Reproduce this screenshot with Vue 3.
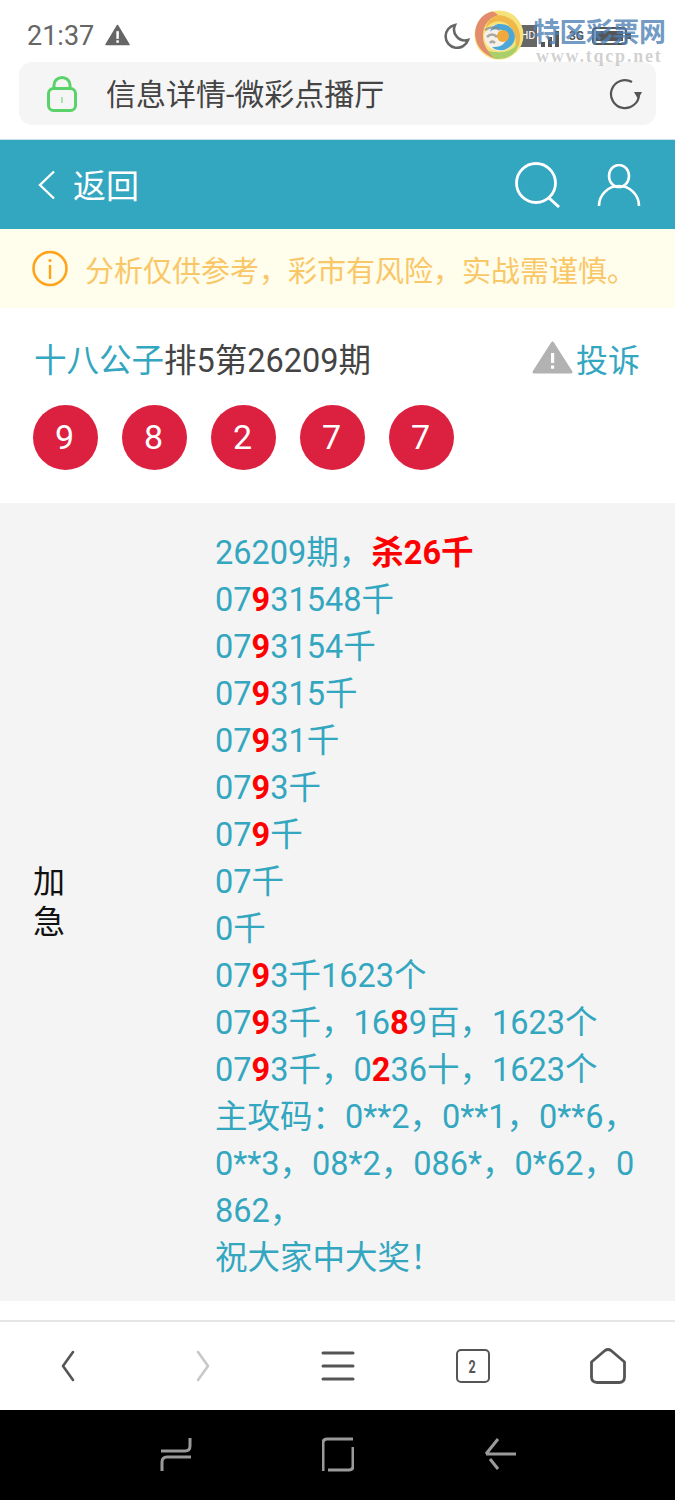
<template>
  <div class="page">
    <div class="status">
      <span class="clock">21:37</span>
      <svg class="st-warn" width="26" height="22" viewBox="0 0 26 22"><path d="M13 1 L25 21 H1 Z" fill="#666" stroke="#666" stroke-width="1.5" stroke-linejoin="round"/><rect x="11.8" y="7" width="2.6" height="8" fill="#fff"/><rect x="11.8" y="16.5" width="2.6" height="2.6" fill="#fff"/></svg>
      <div class="st-right">
        <svg class="st-moon" width="26" height="26" viewBox="0 0 26 26"><path d="M11 2 A11.500 11.500 0 1 0 24 17 A11 11 0 0 1 11 2 Z" fill="none" stroke="#666" stroke-width="2.600"/></svg>
        <svg class="st-wifi" width="26" height="22" viewBox="0 0 26 22"><path d="M2 8 Q13 -1 24 8 M6 12 Q13 6 20 12 M10 16 Q13 13.500 16 16" fill="none" stroke="#777" stroke-width="2.500"/></svg>
        <span class="st-hd">HD</span>
        <svg class="st-signal" width="24" height="24" viewBox="0 0 24 24"><path d="M2 18h4v5H2z M9 13h4v10H9z M16 7h4v16h-4z" fill="#555"/></svg>
        <span class="st-3g">3G</span>
        <svg class="st-batt" width="40" height="20" viewBox="0 0 40 20"><rect x="1" y="2" width="33" height="16" rx="3" fill="none" stroke="#555" stroke-width="2"/><rect x="4" y="5" width="27" height="10" fill="#555"/><rect x="35" y="7" width="4" height="6" fill="#555"/></svg>
      </div>
    </div>

    <div class="addr">
      <svg width="30" height="36" viewBox="0 0 30 36"><rect x="1.500" y="12.500" width="27" height="22" rx="5" fill="none" stroke="#5ad26a" stroke-width="3"/><path d="M7 12 V9 A8 7.500 0 0 1 23 9 V12" fill="none" stroke="#5ad26a" stroke-width="3"/><rect x="14" y="21" width="2" height="6" fill="#a6e4ae"/></svg>
      <span class="addr-text">信息详情-微彩点播厅</span>
      <svg class="reload" width="34" height="32" viewBox="0 0 34 32"><path d="M30 16 A14 14 0 1 1 23 4" fill="none" stroke="#555" stroke-width="2.200"/><path d="M25 14 H33 L29 21 Z" fill="#555"/></svg>
    </div>

    <header class="head">
      <svg width="18" height="30" viewBox="0 0 18 30"><path d="M16 1.500 L2 15 L16 28.500" fill="none" stroke="#fff" stroke-width="2.400"/></svg>
      <span class="head-back">返回</span>
      <svg class="head-search" width="46" height="46" viewBox="0 0 46 46"><circle cx="21" cy="21" r="19.500" fill="none" stroke="#fff" stroke-width="2.800"/><path d="M34 36 L44 45" stroke="#fff" stroke-width="3" fill="none"/></svg>
      <svg class="head-user" width="44" height="44" viewBox="0 0 44 44"><ellipse cx="22" cy="12" rx="10" ry="11" fill="none" stroke="#fff" stroke-width="2.600"/><path d="M2 42 A20 20 0 0 1 42 42" fill="none" stroke="#fff" stroke-width="2.600"/></svg>
    </header>

    <div class="notice">
      <svg width="36" height="37" viewBox="0 0 36 37"><circle cx="18" cy="18.500" r="16.500" fill="none" stroke="#ffa31a" stroke-width="2.600"/><circle cx="18" cy="10.500" r="1.600" fill="#ffa31a"/><rect x="16.800" y="15" width="2.400" height="14" fill="#ffa31a"/></svg>
      <span>分析仅供参考，彩市有风险，实战需谨慎。</span>
    </div>

    <main class="main">
      <div class="title-row">
        <div class="title"><span class="teal">十八公子</span>排5第26209期</div>
        <div class="report">
          <svg width="41" height="33" viewBox="0 0 41 33"><path d="M20.500 2 L39 31 H2 Z" fill="#b2b2b2" stroke="#b2b2b2" stroke-width="3" stroke-linejoin="round"/><rect x="19" y="12" width="3.200" height="10" fill="#fff"/><rect x="19" y="24.500" width="3.200" height="3.200" fill="#fff"/></svg>
          <span class="teal">投诉</span>
        </div>
      </div>

      <div class="balls">
        <span class="ball" v-for="(n, i) in balls" :key="i">{{ n }}</span>
      </div>

      <div class="panel">
        <div class="tag">加急</div>
        <div class="content">
          <div>26209期，<b>杀26千</b></div>
          <div>07<b>9</b>31548千</div>
          <div>07<b>9</b>3154千</div>
          <div>07<b>9</b>315千</div>
          <div>07<b>9</b>31千</div>
          <div>07<b>9</b>3千</div>
          <div>07<b>9</b>千</div>
          <div>07千</div>
          <div>0千</div>
          <div>07<b>9</b>3千1623个</div>
          <div>07<b>9</b>3千，16<b>8</b>9百，1623个</div>
          <div>07<b>9</b>3千，0<b>2</b>36十，1623个</div>
          <div class="wrap">主攻码：0**2，0**1，0**6，0**3，08*2，086*，0*62，0862，</div>
          <div>祝大家中大奖！</div>
        </div>
      </div>
    </main>

    <nav class="browser-bar">
      <svg width="36" height="36" viewBox="0 0 36 36"><path d="M23 4 L13 18 L23 32" fill="none" stroke="#555" stroke-width="2.600" stroke-linecap="round" stroke-linejoin="round"/></svg>
      <svg width="36" height="36" viewBox="0 0 36 36"><path d="M13 4 L23 18 L13 32" fill="none" stroke="#c8c8c8" stroke-width="2.600" stroke-linecap="round" stroke-linejoin="round"/></svg>
      <svg width="36" height="36" viewBox="0 0 36 36"><path d="M3 5 H33 M3 18 H33 M3 31 H33" fill="none" stroke="#555" stroke-width="3" stroke-linecap="round"/></svg>
      <div class="tabs"><span>2</span></div>
      <svg width="36" height="36" viewBox="0 0 36 36"><path d="M1.500 14 L15 2.500 Q18 0.500 21 2.500 L34.500 14 V29 Q34.500 34.500 29 34.500 H7 Q1.500 34.500 1.500 29 Z" fill="none" stroke="#555" stroke-width="2.800" stroke-linejoin="round"/></svg>
    </nav>

    <nav class="system-bar">
      <svg width="32" height="36" viewBox="0 0 32 36"><path d="M1 14 H25 Q30 14 30 9 V1 M31 20 H7 Q2 20 2 25 V34" fill="none" stroke="#9a9a9a" stroke-width="3"/></svg>
      <svg width="32" height="36" viewBox="0 0 32 36"><path d="M1 34 V6 Q1 2 5 2 H31 M31 10 V29 Q31 33 27 33 H6" fill="none" stroke="#9a9a9a" stroke-width="3"/></svg>
      <svg width="32" height="36" viewBox="0 0 32 36"><path d="M1 17 H31 M1 17 L13 2 M5 22 L13 32" fill="none" stroke="#9a9a9a" stroke-width="3"/></svg>
    </nav>

    <div class="watermark">
      <svg class="wm-logo" width="50" height="50" viewBox="0 0 50 50">
        <ellipse cx="25" cy="25" rx="24.500" ry="24.500" fill="#f6e27a"/>
        <path d="M18 1.500 Q2 6 1 24 Q2 42 22 49 Q8 38 9 24 Q10 10 24 5 Q22 2 18 1.500 Z" fill="#e28c6c"/>
        <path d="M24 5 Q42 6 46 24 Q47 36 40 42 Q46 24 32 13 Q20 8 12 18 Q12 10 24 5 Z" fill="#f0b84a"/>
        <path d="M22 49 Q34 50 42 41 Q44 36 44 33 Q36 44 22 42 Q16 42 14 40 Q16 46 22 49 Z" fill="#a9cf6a"/>
        <path d="M10 25 Q10 38 24 41 Q38 41 41 28 Q40 16 28 14 Q14 14 10 25 Z" fill="#f6f1e8"/>
        <path d="M24 14 Q38 13 41 26 Q41 36 30 40 Q22 41 18 37 Q30 38 33 28 Q32 20 24 19 Q18 19 16 22 Q18 15 24 14 Z" fill="#4ba8d6"/>
        <circle cx="29" cy="26" r="6" fill="#f2a93b"/>
        <path d="M11 20 Q18 15 26 20 M13 27 Q18 22 23 27 M16 33 Q18 30 21 33" fill="none" stroke="#888" stroke-width="2.500" opacity="0.700"/>
      </svg>
      <div class="wm-cn">特区彩票网</div>
      <div class="wm-en">www.tqcp.net</div>
    </div>
  </div>
</template>

<script setup>
const balls = [9, 8, 2, 7, 7]
</script>

<style>
html, body { margin: 0; background: #fff; }
</style>

<style scoped>
.page {
  position: relative;
  width: 675px;
  height: 1500px;
  display: flex;
  flex-direction: column;
  overflow: hidden;
  background: #fff;
  font-family: Roboto, "Noto Sans CJK SC", sans-serif;
}
.status { height: 62px; flex: none; display: flex; align-items: center; padding: 10px 45px 0 27px; box-sizing: border-box; color: #666; }
.clock { font-size: 27px; }
.st-warn { margin-left: 11px; margin-top: -3px; width: 25px; }
.st-right { margin-left: auto; display: flex; align-items: center; }
.st-moon { margin-right: 13px; }
.st-wifi { margin-left: 8px; }
.st-hd { margin-left: 2px; width: 18px; height: 22px; line-height: 22px; background: #666; color: #fff; font-size: 11px; text-align: center; }
.st-signal { margin-left: 2px; }
.st-3g { margin-left: 6px; font-size: 12px; font-weight: 700; color: #555; }
.st-batt { margin-left: 8px; margin-right: -2px; }

.addr { height: 63px; flex: none; margin: 0 19px; padding: 0 14px 0 28px; display: flex; align-items: center; background: #f5f5f5; border-radius: 13px; }
.addr-text { margin-left: 29px; margin-top: -4px; font-size: 30px; color: #444; }
.reload { margin-left: auto; margin-right: -1px; }

.head { margin-top: 14px; height: 90px; flex: none; box-sizing: border-box; border-top: 1px solid #c9e2e9; display: flex; align-items: center; padding: 0 34px 0 38px; background: #33a6c0; color: #fff; }
.head-back { margin-left: 17px; margin-top: -2px; font-size: 33px; }
.head-search { margin-left: auto; margin-top: 0; }
.head-user { margin-left: 36px; margin-top: 2px; }

.notice { height: 79px; flex: none; display: flex; align-items: center; padding: 0 0 0 32px; background: #fffdeb; }
.notice span { margin-left: 17px; font-size: 29px; color: #f9c768; white-space: nowrap; }

.main { flex: 1; min-height: 0; }
.title-row { display: flex; align-items: center; justify-content: space-between; padding: 22px 35px 0; height: 77px; box-sizing: border-box; }
.title { font-size: 32.500px; margin-left: -1px; color: #444; }
.teal { color: #33a6c0; }
.report { display: flex; align-items: center; font-size: 32px; gap: 3px; }
.balls { display: flex; gap: 24px; padding: 20px 33px 33px; }
.ball { width: 65px; height: 65px; box-sizing: border-box; padding: 0 2px 2px 0; border-radius: 50%; background: #dc2140; color: #fff; font-size: 34px; display: flex; align-items: center; justify-content: center; }

.panel { display: flex; align-items: center; background: #f4f4f4; padding: 27px 0 19px 33px; }
.tag { width: 32px; font-size: 32px; line-height: 40px; color: #111; margin-bottom: 8px; }
.content { margin-left: 150px; width: 424px; font-size: 32.500px; line-height: 47px; color: #33a6c0; }
.content b { color: #f00; }
.wrap { word-break: break-all; }

.browser-bar { height: 90px; flex: none; box-sizing: border-box; border-top: 2px solid #e6e6e6; display: grid; grid-template-columns: repeat(5, 135px); align-items: center; justify-items: center; }
.tabs { width: 30px; height: 30px; border: 2.500px solid #555; border-radius: 5px; color: #555; font-size: 18px; font-weight: 700; display: flex; align-items: center; justify-content: center; }
.tabs span { transform: scaleX(0.7); }

.system-bar { height: 90px; flex: none; background: #000; display: grid; grid-template-columns: 160px 30px 132px 30px 133px 30px; align-items: center; }
.system-bar svg:nth-child(1) { grid-column: 2; }
.system-bar svg:nth-child(2) { grid-column: 4; }
.system-bar svg:nth-child(3) { grid-column: 6; }

.watermark { position: absolute; left: 474px; top: 10px; width: 200px; height: 54px; }
.wm-logo { position: absolute; left: 0; top: 0; }
.wm-cn { position: absolute; left: 59px; top: 7px; font-size: 27px; line-height: 32px; font-weight: 700; color: rgba(77, 128, 180, 0.8); white-space: nowrap; letter-spacing: -0.500px; }
.wm-en { position: absolute; left: 62px; top: 36px; font-family: "Liberation Serif", serif; font-size: 18px; line-height: 20px; font-weight: 700; color: rgba(170, 170, 170, 0.55); letter-spacing: 1.800px; white-space: nowrap; }
</style>
